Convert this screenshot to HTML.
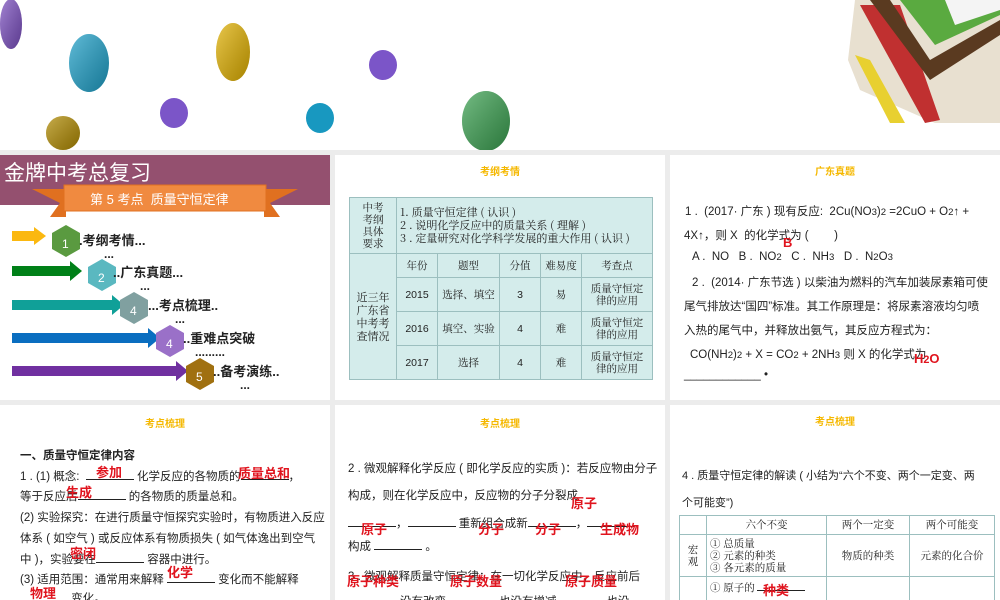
<!DOCTYPE html><html><head><meta charset="utf-8"><style>
*{margin:0;padding:0;box-sizing:border-box}
body{width:1000px;height:600px;overflow:hidden;background:#fff;font-family:"Liberation Sans","Noto Sans CJK SC",sans-serif;position:relative;color:#222}
.abs{position:absolute}
.p{position:absolute;background:#fff;overflow:hidden}
.h{position:absolute;top:8px;left:0;right:0;text-align:center;color:#f5b800;font-size:10px;font-weight:bold}
.red{color:#e0141e;font-weight:bold;position:absolute;font-size:13px}
table{border-collapse:collapse;font-family:"Noto Serif CJK SC",serif}
td{border:1px solid #9cbfbf;text-align:center;font-size:10.5px;line-height:12px}
.t{position:absolute;font-size:11.5px;white-space:nowrap}
.u{display:inline-block;border-bottom:1px solid #222;height:10px;vertical-align:baseline}
</style></head><body>
<svg class="abs" style="left:0;top:0" width="1000" height="150">
<defs>
<linearGradient id="g" x1="0" y1="0" x2="1" y2="1"><stop offset="0" stop-color="#fff" stop-opacity=".3"/><stop offset="1" stop-color="#000" stop-opacity=".25"/></linearGradient></defs>
<ellipse cx="11" cy="24" rx="11" ry="25" fill="#7b4fc0"/>
<ellipse cx="89" cy="63" rx="20" ry="29" fill="#1ea0c8"/>
<ellipse cx="233" cy="52" rx="17" ry="29" fill="#e0b000"/>
<ellipse cx="383" cy="65" rx="14" ry="15" fill="#7b55c8"/>
<ellipse cx="174" cy="113" rx="14" ry="15" fill="#7b55c8"/>
<ellipse cx="320" cy="118" rx="14" ry="15" fill="#1898c0"/>
<ellipse cx="486" cy="121" rx="24" ry="30" fill="#3aa050"/>
<ellipse cx="63" cy="133" rx="17" ry="17" fill="#b08a00"/>
<g fill="url(#g)"><ellipse cx="11" cy="24" rx="11" ry="25"/><ellipse cx="89" cy="63" rx="20" ry="29"/><ellipse cx="233" cy="52" rx="17" ry="29"/><ellipse cx="486" cy="121" rx="24" ry="30"/><ellipse cx="63" cy="133" rx="17" ry="17"/></g>
<polygon points="855,0 1000,0 1000,123 935,123 860,90 848,60" fill="#e8e0d0"/>
<polygon points="860,5 900,5 940,120 925,123" fill="#c03030"/>
<polygon points="870,0 890,0 930,60 1000,20 1000,35 930,80" fill="#5a3a20"/>
<polygon points="900,0 960,0 1000,5 1000,15 935,45" fill="#5aaa40"/>
<polygon points="855,55 870,60 905,123 890,123" fill="#e8d030"/>
<polygon points="945,0 1000,0 1000,10 955,25" fill="#f4f4f4"/>
</svg>
<div class="abs" style="left:0;top:150px;width:1000px;height:450px;background:#ececec"></div>
<div class="p" style="left:0;top:155px;width:330px;height:245px">
<div class="abs" style="left:0;top:0;width:330px;height:50px;background:#94506f"></div>
<div class="abs" style="left:4px;top:2px;color:#fff;font-size:21px">金牌中考总复习</div>
<svg class="abs" style="left:30px;top:28px" width="270" height="38"><polygon points="2,6 36,6 36,34 20,34 30,20" fill="#e07020"/><polygon points="268,6 234,6 234,34 250,34 240,20" fill="#e07020"/><rect x="34" y="2" width="202" height="26" fill="#f08a40" stroke="#e07020"/></svg>
<div class="abs" style="left:90px;top:34px;color:#fff;font-size:13px">第 5 考点&nbsp; 质量守恒定律</div>
<svg class="abs" style="left:0;top:60px" width="300" height="180">
<g><rect x="12" y="16" width="22" height="10" fill="#fbb810"/><polygon points="34,12 46,21 34,30" fill="#fbb810"/>
<rect x="12" y="51" width="58" height="10" fill="#008018"/><polygon points="70,46 82,56 70,66" fill="#008018"/>
<rect x="12" y="85" width="100" height="10" fill="#10a098"/><polygon points="112,80 124,90 112,100" fill="#10a098"/>
<rect x="12" y="118" width="136" height="10" fill="#0a6ec0"/><polygon points="148,113 160,123 148,133" fill="#0a6ec0"/>
<rect x="12" y="151" width="164" height="10" fill="#7030a0"/><polygon points="176,146 188,156 176,166" fill="#7030a0"/></g>
<g font-size="12" fill="#fff" font-family="Liberation Sans">
<polygon points="66,10 80,18 80,34 66,42 52,34 52,18" fill="#5a9a40"/><text x="62" y="33">1</text>
<polygon points="102,44 116,52 116,68 102,76 88,68 88,52" fill="#5ab8c0"/><text x="98" y="67">2</text>
<polygon points="134,77 148,85 148,101 134,109 120,101 120,85" fill="#80a0a0"/><text x="130" y="100">4</text>
<polygon points="170,110 184,118 184,134 170,142 156,134 156,118" fill="#9a70c8"/><text x="166" y="133">4</text>
<polygon points="200,143 214,151 214,167 200,175 186,167 186,151" fill="#a07010"/><text x="196" y="166">5</text></g></svg>
<div class="abs" style="font-size:13px;font-weight:bold;left:79px;top:75px">.考纲考情...</div>
<div class="abs" style="font-size:12px;font-weight:bold;left:104px;top:92px">...</div>
<div class="abs" style="font-size:13px;font-weight:bold;left:113px;top:107px">..广东真题...</div>
<div class="abs" style="font-size:12px;font-weight:bold;left:140px;top:124px">...</div>
<div class="abs" style="font-size:13px;font-weight:bold;left:148px;top:140px">...考点梳理..</div>
<div class="abs" style="font-size:12px;font-weight:bold;left:175px;top:157px">...</div>
<div class="abs" style="font-size:13px;font-weight:bold;left:183px;top:173px">..重难点突破</div>
<div class="abs" style="font-size:12px;font-weight:bold;left:195px;top:190px">.........</div>
<div class="abs" style="font-size:13px;font-weight:bold;left:213px;top:206px">..备考演练..</div>
<div class="abs" style="font-size:12px;font-weight:bold;left:240px;top:223px">...</div>
</div>
<div class="p" style="left:335px;top:155px;width:330px;height:245px">
<div class="h">考纲考情</div>
<table class="abs" style="left:14px;top:42px;width:304px;background:#d4eceb">
<tr style="height:56px"><td style="width:47px">中考<br>考纲<br>具体<br>要求</td><td colspan="5" style="text-align:left;padding-left:3px;font-size:11px;line-height:13px">1. 质量守恒定律 ( 认识 )<br>2 . 说明化学反应中的质量关系 ( 理解 )<br>3 . 定量研究对化学科学发展的重大作用 ( 认识 )</td></tr>
<tr style="height:24px"><td rowspan="4" style="font-size:11px;line-height:13px">近三年<br>广东省<br>中考考<br>查情况</td><td style="width:41px">年份</td><td style="width:62px">题型</td><td style="width:41px">分值</td><td style="width:41px">难易度</td><td>考查点</td></tr>
<tr style="height:34px"><td style="font-family:'Liberation Sans'">2015</td><td>选择、填空</td><td style="font-family:'Liberation Sans'">3</td><td>易</td><td>质量守恒定<br>律的应用</td></tr>
<tr style="height:34px"><td style="font-family:'Liberation Sans'">2016</td><td>填空、实验</td><td style="font-family:'Liberation Sans'">4</td><td>难</td><td>质量守恒定<br>律的应用</td></tr>
<tr style="height:34px"><td style="font-family:'Liberation Sans'">2017</td><td>选择</td><td style="font-family:'Liberation Sans'">4</td><td>难</td><td>质量守恒定<br>律的应用</td></tr>
</table></div>
<div class="p" style="left:670px;top:155px;width:330px;height:245px">
<div class="h">广东真题</div>
<div class="t" style="left:15px;top:48px">1 .&nbsp; (2017· 广东 ) 现有反应:&nbsp;&nbsp;2Cu(NO<small>3</small>)<small>2</small> =2CuO + O<small>2</small>↑ +</div>
<div class="t" style="left:14px;top:72px">4X↑，则 X&nbsp; 的化学式为 (&nbsp;&nbsp;&nbsp;&nbsp;&nbsp;&nbsp;&nbsp; )</div>
<div class="red" style="left:113px;top:80px">B</div>
<div class="t" style="left:22px;top:96px">A . &nbsp;NO &nbsp;&nbsp;B . &nbsp;NO<small>2</small> &nbsp;&nbsp;C . &nbsp;NH<small>3</small> &nbsp;&nbsp;D . &nbsp;N<small>2</small>O<small>3</small></div>
<div class="t" style="left:22px;top:119px">2 .&nbsp; (2014· 广东节选 ) 以柴油为燃料的汽车加装尿素箱可使</div>
<div class="t" style="left:14px;top:143px">尾气排放达“国四”标准。其工作原理是：将尿素溶液均匀喷</div>
<div class="t" style="left:14px;top:167px">入热的尾气中，并释放出氨气，其反应方程式为：</div>
<div class="t" style="left:20px;top:191px">CO(NH<small>2</small>)<small>2</small> + X = CO<small>2</small> + 2NH<small>3</small> 则 X 的化学式为</div>
<div class="red" style="left:244px;top:196px">H<small>2</small>O</div>
<div class="t" style="left:14px;top:214px">____________ •</div>
</div>
<div class="p" style="left:0;top:405px;width:330px;height:195px">
<div class="h" style="top:10px">考点梳理</div>
<div class="t" style="left:20px;top:42px;font-weight:bold">一、质量守恒定律内容</div>
<div class="t" style="left:20px;top:63px">1 . (1) 概念:&nbsp;&nbsp;<span class="u" style="width:48px"></span> 化学反应的各物质的<span class="u" style="width:48px"></span>，</div>
<div class="red" style="left:96px;top:57px">参加</div><div class="red" style="left:238px;top:58px">质量总和</div>
<div class="t" style="left:20px;top:83px">等于反应后<span class="u" style="width:48px"></span> 的各物质的质量总和。</div>
<div class="red" style="left:66px;top:77px">生成</div>
<div class="t" style="left:20px;top:104px">(2) 实验探究：在进行质量守恒探究实验时，有物质进入反应</div>
<div class="t" style="left:20px;top:125px">体系 ( 如空气 ) 或反应体系有物质损失 ( 如气体逸出到空气</div>
<div class="t" style="left:20px;top:146px">中 )，实验要在<span class="u" style="width:48px"></span> 容器中进行。</div>
<div class="red" style="left:70px;top:138px">密闭</div>
<div class="t" style="left:20px;top:166px">(3) 适用范围：通常用来解释 <span class="u" style="width:48px"></span> 变化而不能解释</div>
<div class="red" style="left:167px;top:157px">化学</div>
<div class="t" style="left:20px;top:185px"><span class="u" style="width:48px"></span> 变化。</div>
<div class="red" style="left:30px;top:178px">物理</div>
</div>
<div class="p" style="left:335px;top:405px;width:330px;height:195px">
<div class="h" style="top:10px">考点梳理</div>
<div class="t" style="left:13px;top:55px">2 . 微观解释化学反应 ( 即化学反应的实质 )：若反应物由分子</div>
<div class="t" style="left:13px;top:82px">构成，则在化学反应中，反应物的分子分裂成</div>
<div class="red" style="left:236px;top:88px">原子</div>
<div class="t" style="left:13px;top:110px"><span class="u" style="width:48px"></span>，<span class="u" style="width:48px"></span> 重新组合成新<span class="u" style="width:48px"></span>，<span class="u" style="width:48px"></span></div>
<div class="red" style="left:26px;top:114px">原子</div><div class="red" style="left:143px;top:114px">分子</div><div class="red" style="left:200px;top:114px">分子</div><div class="red" style="left:265px;top:114px">生成物</div>
<div class="t" style="left:13px;top:133px">构成 <span class="u" style="width:48px"></span> 。</div>
<div class="t" style="left:13px;top:163px">3 . 微观解释质量守恒定律：在一切化学反应中，反应前后</div>
<div class="red" style="left:12px;top:166px">原子种类</div><div class="red" style="left:115px;top:166px">原子数量</div><div class="red" style="left:230px;top:166px">原子质量</div>
<div class="t" style="left:65px;top:188px">没有改变，&nbsp;&nbsp;&nbsp;&nbsp;&nbsp;&nbsp;&nbsp;&nbsp;&nbsp;&nbsp;&nbsp;&nbsp;&nbsp;也没有增减，&nbsp;&nbsp;&nbsp;&nbsp;&nbsp;&nbsp;&nbsp;&nbsp;&nbsp;&nbsp;&nbsp;&nbsp;也没</div>
</div>
<div class="p" style="left:670px;top:405px;width:330px;height:195px">
<div class="h" style="top:8px">考点梳理</div>
<div class="t" style="left:12px;top:62px;font-size:11px">4 . 质量守恒定律的解读 ( 小结为“六个不变、两个一定变、两</div>
<div class="t" style="left:12px;top:89px;font-size:11px">个可能变”)</div>
<table class="abs" style="left:9px;top:110px;width:316px">
<tr style="height:19px"><td style="width:27px"></td><td style="width:120px">六个不变</td><td style="width:83px">两个一定变</td><td>两个可能变</td></tr>
<tr style="height:42px"><td>宏<br>观</td><td style="text-align:left;padding-left:3px">① 总质量<br>② 元素的种类<br>③ 各元素的质量</td><td>物质的种类</td><td>元素的化合价</td></tr>
<tr style="height:40px"><td style="vertical-align:bottom">微</td><td style="text-align:left;padding-left:3px;vertical-align:top;padding-top:4px">① 原子的 <span class="u" style="width:48px"></span></td><td></td><td></td></tr>
</table>
<div class="red" style="left:93px;top:175px">种类</div>
</div>
</body></html>
